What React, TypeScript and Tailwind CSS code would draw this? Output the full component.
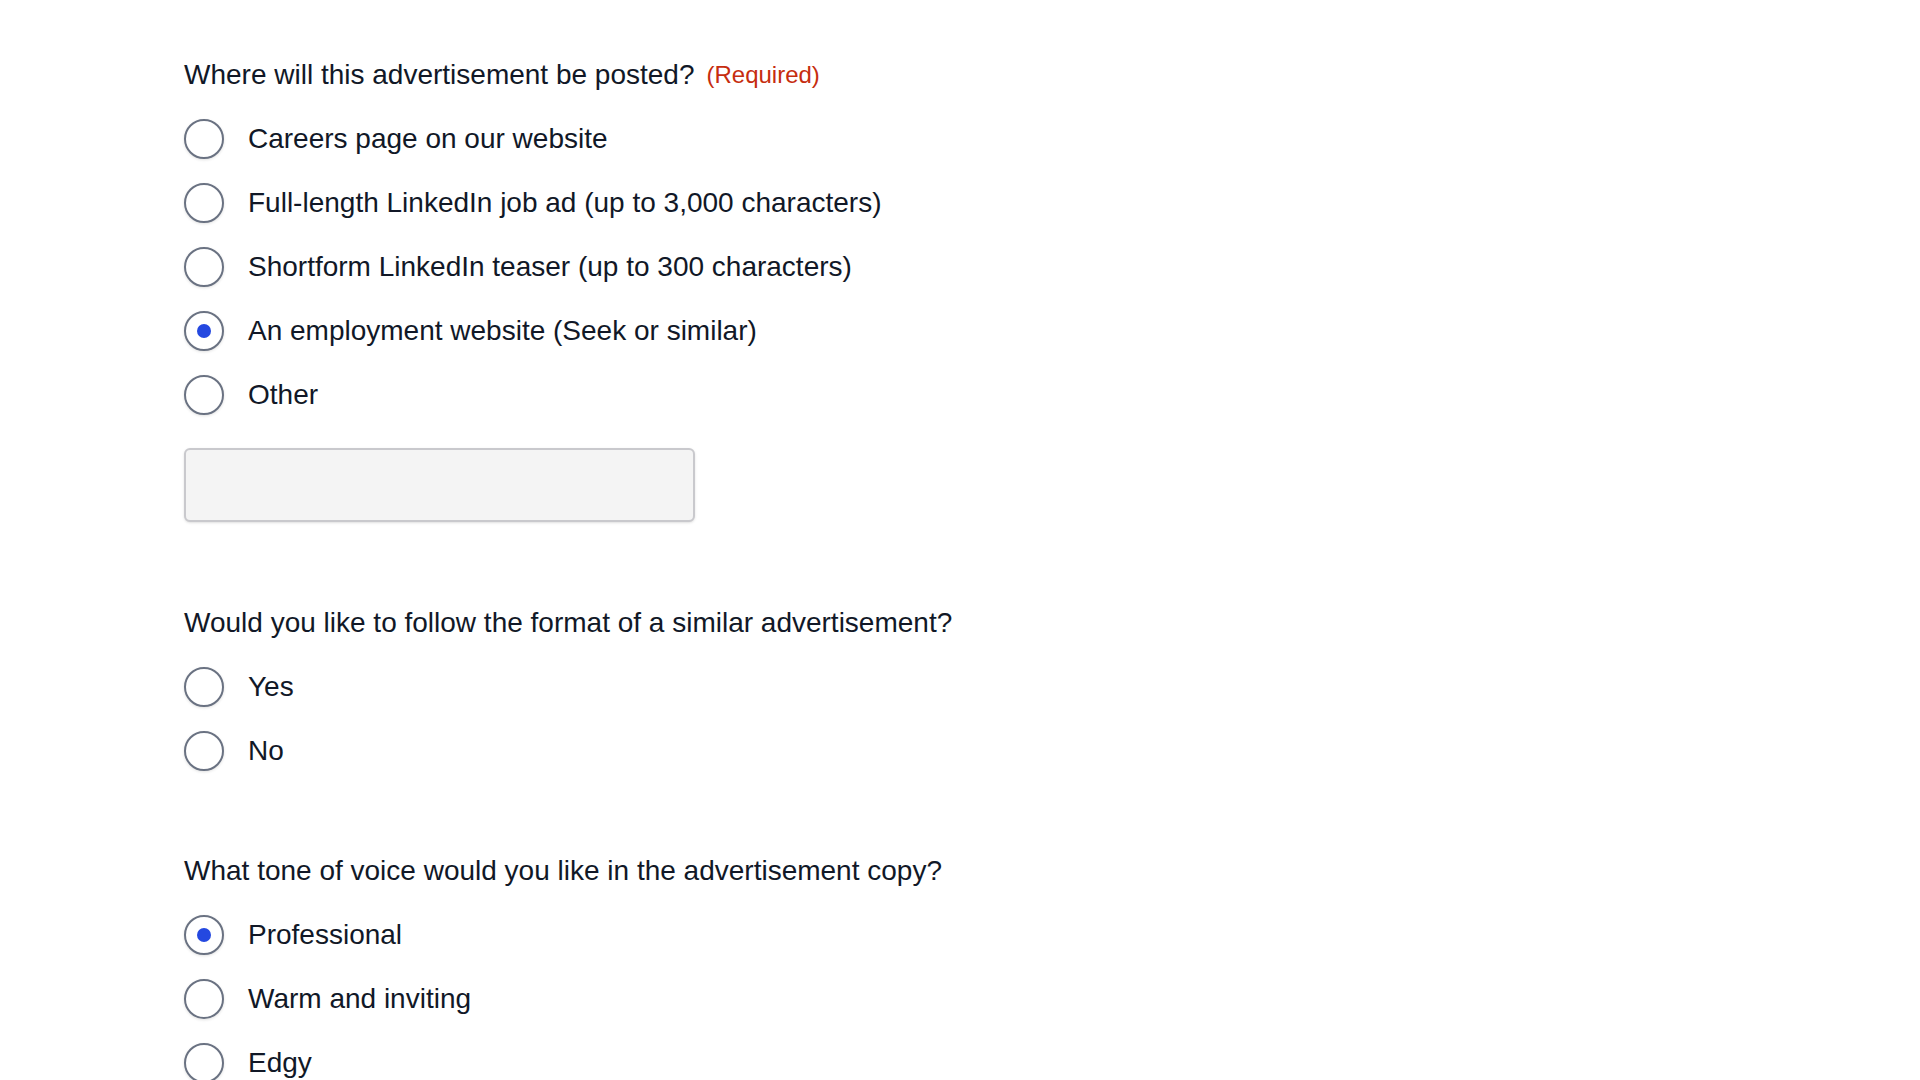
import { useState } from 'react'

type Question = {
  id: string
  label: string
  required?: boolean
  options: string[]
  withOther?: boolean
}

const questions: Question[] = [
  {
    id: 'placement',
    label: 'Where will this advertisement be posted?',
    required: true,
    options: [
      'Careers page on our website',
      'Full-length LinkedIn job ad (up to 3,000 characters)',
      'Shortform LinkedIn teaser (up to 300 characters)',
      'An employment website (Seek or similar)',
      'Other',
    ],
    withOther: true,
  },
  {
    id: 'format',
    label: 'Would you like to follow the format of a similar advertisement?',
    options: ['Yes', 'No'],
  },
  {
    id: 'tone',
    label: 'What tone of voice would you like in the advertisement copy?',
    options: ['Professional', 'Warm and inviting', 'Edgy'],
  },
]

function Radio({ checked }: { checked: boolean }) {
  return (
    <span className="flex h-10 w-10 shrink-0 items-center justify-center rounded-full border-2 border-gray-500 bg-white shadow-[0_1px_3px_rgba(0,0,0,0.12)]">
      {checked && <span className="h-[14px] w-[14px] rounded-full bg-[#2448e0]" />}
    </span>
  )
}

export default function App() {
  const [answers, setAnswers] = useState<Record<string, string>>({
    placement: 'An employment website (Seek or similar)',
    tone: 'Professional',
  })
  const [other, setOther] = useState('')

  return (
    <div className="min-h-screen bg-white pl-[184px] pt-[59px] font-['Liberation_Sans',Arial,sans-serif] text-[#111827]">
      {questions.map((q, i) => (
        <fieldset key={q.id} className={i === 0 ? '' : i === 1 ? 'mt-[85px]' : 'mt-[72px]'}>
          <legend className="mb-4 flex h-8 items-center gap-3 text-[28px] leading-8">
            <span>{q.label}</span>
            {q.required && <span className="text-[24px] text-[#c62d0f]">(Required)</span>}
          </legend>
          <div className="flex flex-col">
            {q.options.map((opt) => (
              <label
                key={opt}
                className="flex h-16 cursor-pointer items-center gap-6 text-[28px]"
                onClick={() => setAnswers({ ...answers, [q.id]: opt })}
              >
                <Radio checked={answers[q.id] === opt} />
                <span>{opt}</span>
              </label>
            ))}
          </div>
          {q.withOther && (
            <input
              value={other}
              onChange={(e) => setOther(e.target.value)}
              className="mt-[21px] block h-[74px] w-[511px] rounded-md border-2 border-[#c9c9cd] bg-[#f4f4f4] px-4 text-[24px] shadow-sm outline-none"
            />
          )}
        </fieldset>
      ))}
    </div>
  )
}
